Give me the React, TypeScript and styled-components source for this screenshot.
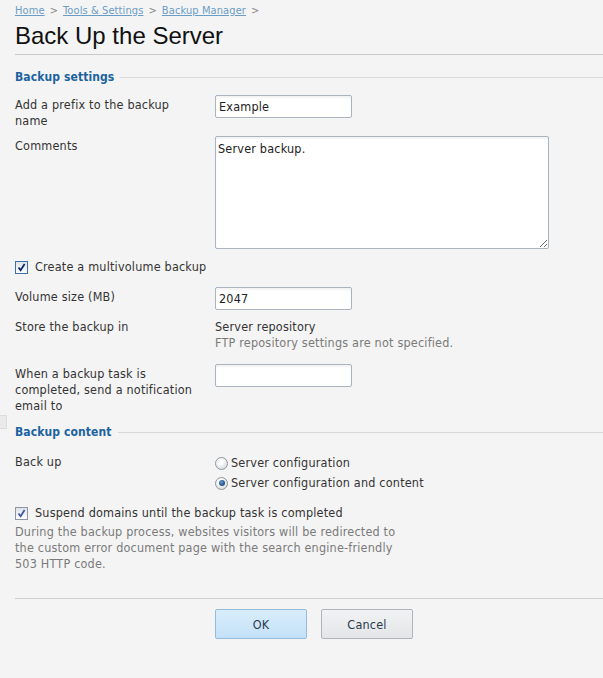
import React from "react";
import styled, { createGlobalStyle } from "styled-components";

const GlobalStyle = createGlobalStyle`
  html, body {
    margin: 0;
    padding: 0;
    background: #f4f4f4;
  }
  body {
    font-family: "DejaVu Sans Condensed", "DejaVu Sans", sans-serif;
    font-size: 12.5px;
    letter-spacing: 0.2px;
    color: #333;
  }
`;

const Page = styled.div`
  position: relative;
  min-height: 678px;
  padding: 4px 0 0 15px;
  box-sizing: border-box;
`;

const Crumbs = styled.div`
  display: flex;
  align-items: center;
  gap: 5px;
  font-size: 11px;
  letter-spacing: 0.1px;
  line-height: 14px;
  color: #888;
`;

const Crumb = styled.a`
  color: #6b9cc6;
  text-decoration: underline;
`;

const Title = styled.h1`
  margin: 4px 0 0;
  font-family: "Liberation Sans", Arial, sans-serif;
  font-weight: 400;
  font-size: 24px;
  letter-spacing: 0;
  line-height: 28px;
  color: #111;
  padding-bottom: 4px;
  border-bottom: 1px solid #c9c9c9;
`;

const Section = styled.div<{ $top: number }>`
  display: flex;
  align-items: center;
  gap: 6px;
  margin-top: ${(p) => p.$top}px;
  font-size: 12px;
  letter-spacing: 0.1px;
  line-height: 18px;
  color: #1b63a0;
  font-weight: 600;

  &::after {
    content: "";
    flex: 1;
    height: 1px;
    background: #d9d9d9;
  }
`;

const Row = styled.div<{ $top: number }>`
  display: grid;
  grid-template-columns: 200px 1fr;
  margin-top: ${(p) => p.$top}px;
  line-height: 16px;
`;

const Label = styled.div<{ $pad?: number }>`
  padding-top: ${(p) => p.$pad ?? 0}px;
  padding-right: 16px;
`;

const TextInput = styled.input`
  display: block;
  box-sizing: border-box;
  width: 137px;
  height: 23px;
  padding: 2px 3px;
  border: 1px solid #aab4be;
  border-radius: 2px;
  background: #fff;
  box-shadow: inset 0 2px 2px rgba(0, 0, 0, 0.05);
  font: inherit;
  letter-spacing: inherit;
  color: #222;
  outline: none;
`;

const TextArea = styled.textarea`
  display: block;
  box-sizing: border-box;
  width: 334px;
  height: 113px;
  padding: 4px 2px;
  border: 1px solid #aab4be;
  border-radius: 2px;
  background: #fff;
  box-shadow: inset 0 2px 2px rgba(0, 0, 0, 0.05);
  font: inherit;
  letter-spacing: inherit;
  line-height: 16px;
  color: #222;
  resize: both;
  outline: none;
`;

const CheckLine = styled.label<{ $top: number }>`
  display: flex;
  align-items: center;
  gap: 7px;
  margin-top: ${(p) => p.$top}px;
  line-height: 16px;
`;

const Box = styled.span<{ $muted?: boolean }>`
  display: inline-flex;
  align-items: center;
  justify-content: center;
  box-sizing: border-box;
  width: 13px;
  height: 13px;
  border: 1px solid ${(p) => (p.$muted ? "#8d97a3" : "#3f6fa6")};
  background: linear-gradient(#dfe4ea, #fbfcfd);
`;

const Hint = styled.div<{ $width?: number; $top?: number }>`
  color: #7a7a7a;
  line-height: 16px;
  margin-top: ${(p) => p.$top ?? 0}px;
  max-width: ${(p) => (p.$width ? `${p.$width}px` : "none")};
`;

const Radios = styled.div`
  display: flex;
  flex-direction: column;
`;

const RadioLine = styled.label`
  display: flex;
  align-items: center;
  gap: 3px;
  height: 20px;
`;

const Dot = styled.span<{ $on?: boolean }>`
  display: inline-flex;
  align-items: center;
  justify-content: center;
  box-sizing: border-box;
  width: 13px;
  height: 13px;
  border-radius: 50%;
  border: 1px solid #8f969d;
  background: radial-gradient(circle at 40% 35%, #ffffff 20%, #c9ced3);

  &::after {
    content: "";
    display: ${(p) => (p.$on ? "block" : "none")};
    width: 6px;
    height: 6px;
    border-radius: 50%;
    background: radial-gradient(circle at 40% 35%, #5d9ad6, #0c2f5a);
  }
`;

const Rule = styled.div`
  margin-top: 26px;
  height: 1px;
  background: #cfcfcf;
`;

const Buttons = styled.div`
  display: flex;
  gap: 14px;
  margin: 10px 0 0 200px;
`;

const Button = styled.button<{ $primary?: boolean }>`
  width: 92px;
  height: 30px;
  border-radius: 2px;
  border: 1px solid ${(p) => (p.$primary ? "#93bbdc" : "#aeb4ba")};
  background: ${(p) =>
    p.$primary
      ? "linear-gradient(#d9edfc, #c4e1f8)"
      : "linear-gradient(#f1f2f3, #e3e5e7)"};
  font: inherit;
  letter-spacing: inherit;
  color: #2a3a4a;
  cursor: pointer;
`;

const Handle = styled.div`
  position: absolute;
  left: 0;
  top: 415px;
  width: 6px;
  height: 12px;
  border: 1px solid #ddd;
  border-left: none;
  background: #eaeaea;
`;

const Check = ({ muted }: { muted?: boolean }) => (
  <Box $muted={muted}>
    <svg width="9" height="9" viewBox="0 0 9 9">
      <path
        d="M1.5 4.5 L3.6 7.2 L7.6 1"
        fill="none"
        stroke={muted ? "#3d55a0" : "#0b1f6b"}
        strokeWidth="1.7"
      />
    </svg>
  </Box>
);

const App = () => {
  return (
    <>
      <GlobalStyle />
      <Page>
        <Handle />
        <Crumbs>
          <Crumb>Home</Crumb>
          <span>&gt;</span>
          <Crumb>Tools &amp; Settings</Crumb>
          <span>&gt;</span>
          <Crumb>Backup Manager</Crumb>
          <span>&gt;</span>
        </Crumbs>
        <Title>Back Up the Server</Title>

        <Section $top={13}>Backup settings</Section>

        <Row $top={9}>
          <Label $pad={2}>Add a prefix to the backup name</Label>
          <div>
            <TextInput defaultValue="Example" />
          </div>
        </Row>

        <Row $top={7}>
          <Label $pad={2}>Comments</Label>
          <div>
            <TextArea defaultValue="Server backup." />
          </div>
        </Row>

        <CheckLine $top={10}>
          <Check />
          Create a multivolume backup
        </CheckLine>

        <Row $top={12}>
          <Label $pad={2}>Volume size (MB)</Label>
          <div>
            <TextInput defaultValue="2047" />
          </div>
        </Row>

        <Row $top={9}>
          <Label>Store the backup in</Label>
          <div>
            <div>Server repository</div>
            <Hint>FTP repository settings are not specified.</Hint>
          </div>
        </Row>

        <Row $top={13}>
          <Label $pad={2}>
            When a backup task is completed, send a notification email to
          </Label>
          <div>
            <TextInput />
          </div>
        </Row>

        <Section $top={9}>Backup content</Section>

        <Row $top={12}>
          <Label $pad={1}>Back up</Label>
          <Radios>
            <RadioLine>
              <Dot />
              Server configuration
            </RadioLine>
            <RadioLine>
              <Dot $on />
              Server configuration and content
            </RadioLine>
          </Radios>
        </Row>

        <CheckLine $top={12}>
          <Check muted />
          Suspend domains until the backup task is completed
        </CheckLine>
        <Hint $width={392} $top={3}>
          During the backup process, websites visitors will be redirected to
          the custom error document page with the search engine-friendly 503
          HTTP code.
        </Hint>

        <Rule />
        <Buttons>
          <Button $primary>OK</Button>
          <Button>Cancel</Button>
        </Buttons>
      </Page>
    </>
  );
};

export default App;
